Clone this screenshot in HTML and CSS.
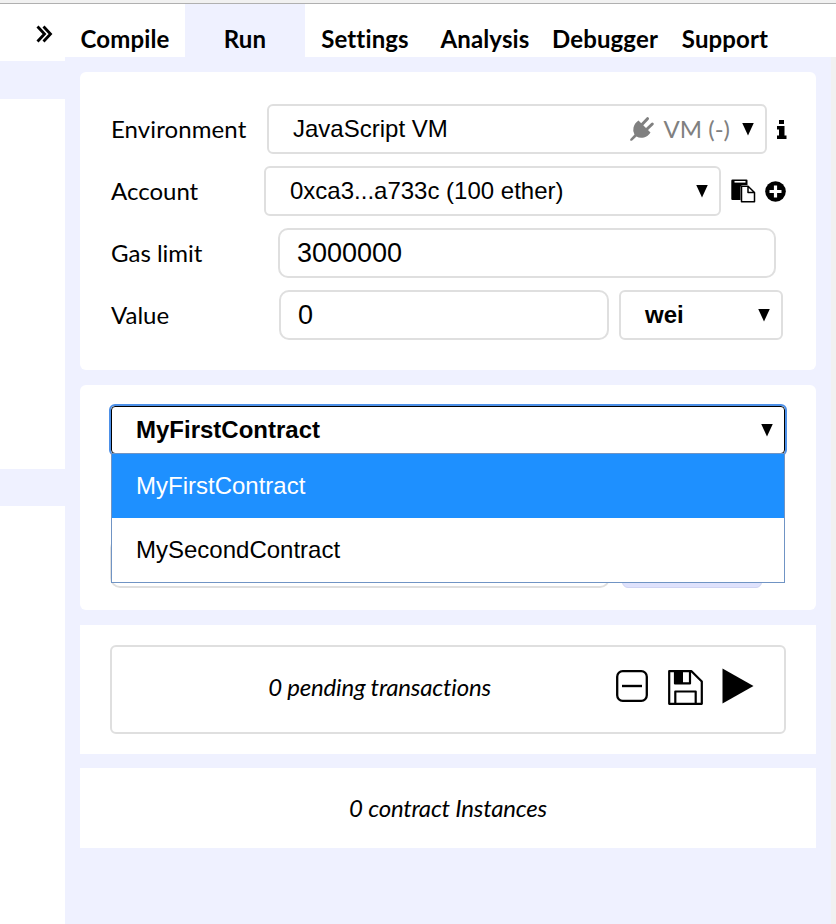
FILE: index.html
```html
<!DOCTYPE html>
<html lang="en">
<head>
<meta charset="utf-8">
<title>Run</title>
<link rel="stylesheet" href="styles.css">
</head>
<body>
<div class="chrome"></div>
<div class="app">
  <aside class="side">
    <div class="toggle"><svg width="18" height="18" viewBox="0 0 18 18" fill="none" stroke="#000" stroke-width="2.8"><path d="M1.500 1.500 8.500 9 1.500 16.500M7.500 1.500 14.500 9 7.500 16.500"/></svg></div>
    <div class="pane upper"></div>
    <div class="pane lower"></div>
  </aside>
  <div class="main">
    <nav class="tabs">
      <span class="tab">Compile</span><span class="tab active">Run</span><span class="tab">Settings</span><span class="tab">Analysis</span><span class="tab">Debugger</span><span class="tab">Support</span>
    </nav>
    <div class="body">
      <div class="content">
        <section class="card settings">
          <div class="row">
            <span class="label env-label">Environment</span>
            <div class="select env"><span>JavaScript VM</span>
              <span class="net"><svg width="24" height="24" viewBox="0 0 24 24"><path d="M8.500 3.500 20.500 15.500Q18 19.500 14 20.500 9.500 21.500 6.500 19.500L2.200 23.500Q1 24.200.3 23.500-.3 22.600.6 21.700L4.500 17.500Q2.500 14.500 3.500 10.500 4.500 6 8.500 3.500Z" fill="#808080"/><path d="m11.500 8 6-6.300M16 13l6.300-6" stroke="#808080" stroke-width="3" stroke-linecap="round"/></svg><span class="vm">VM (-)</span></span>
              <i class="arrow"></i></div>
            <svg class="info" width="10" height="19" viewBox="0 0 10 19"><path d="M2 0h5v4H2zM0 6h7.500v9.500H9.500V19H0v-3.500h2V9.500H0z"/></svg>
          </div>
          <div class="row">
            <span class="label">Account</span>
            <div class="select acct"><span>0xca3...a733c (100 ether)</span><i class="arrow"></i></div>
            <svg class="copy" width="25" height="24" viewBox="0 0 25 24"><path d="M1.500.5h14q1 0 1 1V6H12q-2.500 0-2.500 2.500V21h-8q-1.200 0-1.200-1V1.700Q.3.500 1.500.5Z"/><path d="M3.500 2.800h11" stroke="#fff" stroke-width="1.600"/><path d="M10.500 7.200h6.600l6.400 6.300v9.300h-13zM17 7.200v6.300h6.500" fill="#fff" stroke="#000" stroke-width="1.500" stroke-linejoin="round"/></svg>
            <svg class="plus" width="21" height="21" viewBox="0 0 21 21"><circle cx="10.500" cy="10.500" r="10.300"/><path d="M10.500 4.500v12M4.500 10.500h12" stroke="#fff" stroke-width="3.200"/></svg>
          </div>
          <div class="row">
            <span class="label">Gas limit</span>
            <div class="input gas">3000000</div>
          </div>
          <div class="row">
            <span class="label">Value</span>
            <div class="input val">0</div>
            <div class="select unit"><span>wei</span><i class="arrow"></i></div>
          </div>
        </section>
        <section class="card contract">
          <div class="select name"><span>MyFirstContract</span><i class="arrow"></i></div>
          <div class="covered"><div class="input address"></div><div class="button"></div></div>
          <div class="menu"><div class="option chosen">MyFirstContract</div><div class="option">MySecondContract</div></div>
        </section>
        <section class="card pending">
          <div class="box">
            <span class="count">0 pending transactions</span>
            <svg class="minus" width="32" height="32" viewBox="0 0 32 32" fill="none" stroke="#000"><rect x="1.200" y="1.200" width="29.600" height="29.600" rx="5.500" stroke-width="2.300"/><path d="M6 16h20" stroke-width="2.400"/></svg>
            <svg class="save" width="35" height="35" viewBox="0 0 35 35" fill="none" stroke="#000" stroke-width="2.200" stroke-linejoin="round"><path d="M1.200 1.200h22.300L33.800 11.500v22.300H1.200zM7.300 33.800V21.500h20.400v12.300M7 1.200v12.200h15V1.200"/><path d="M7 1.200h8v12.200H7z" fill="#000" stroke="none"/></svg>
            <svg width="32" height="36" viewBox="0 0 32 36"><path d="M.5.500 31.500 18 .5 35.500z"/></svg>
          </div>
        </section>
        <section class="card instances">0 contract Instances</section>
      </div>
      <div class="scroll"></div>
    </div>
  </div>
</div>
</body>
</html>
```
FILE: styles.css
```css
* { box-sizing: border-box; }
body { margin: 0; height: 924px; overflow: hidden; background: #eff1ff; color: #000; font-family: Lato, sans-serif; font-size: 24px; font-variant-ligatures: none; }
svg { display: block; flex: none; overflow: visible; }
.chrome { height: 4px; background: #f1f1f1; border-bottom: 1px solid #b0b0b0; }
.app { display: flex; height: 920px; }
.side { flex: none; width: 65px; display: flex; flex-direction: column; }
.toggle { height: 57px; background: #fff; padding: 21px 0 0 36px; }
.pane { background: #fff; }
.upper { height: 370px; margin-top: 38px; }
.lower { flex: 1; margin-top: 37px; }
.main { flex: 1; min-width: 0; display: flex; flex-direction: column; }
.tabs { height: 53px; display: flex; background: #fff; }
.tab { flex: none; width: 120px; padding-top: 17px; line-height: 36px; text-align: center; font-weight: 700; letter-spacing: .12px; white-space: nowrap; }
.active { background: #eff1ff; }
.body { flex: 1; display: flex; }
.content { flex: 1; min-width: 0; padding: 15px; display: flex; flex-direction: column; }
.scroll { width: 5px; background: #f1f1f1; }
.card { background: #fff; border-radius: 6px; }
.settings { height: 298px; padding: 32px 29px 32px 31px; display: flex; flex-direction: column; gap: 12px; }
.row { height: 50px; display: flex; align-items: center; }
.label { width: 169px; flex: none; line-height: 30px; }
.env-label { letter-spacing: .1px; }
.select, .input { height: 50px; border: 2px solid #dfdfdf; flex: none; background: #fff; font-family: "Liberation Sans", sans-serif; }
.select { border-radius: 6px; padding: 0 11px 0 24px; display: flex; align-items: center; justify-content: space-between; font-size: 24px; }
.arrow { width: 12px; height: 13px; background: #000; clip-path: polygon(0 0, 100% 0, 50% 100%); flex: none; }
.env { width: 500px; margin-left: -13px; }
.net { display: flex; align-items: center; gap: 10px; margin-left: auto; margin-right: 12px; color: #808080; font-family: Lato, sans-serif; }
.vm { line-height: 28px; padding-bottom: 1px; }
.info { margin-left: 10px; }
.acct { width: 457px; margin-left: -16px; }
.copy { margin-left: 10px; }
.plus { margin-left: 9px; }
.input { border-radius: 10px; padding-left: 17px; font-size: 27px; line-height: 46px; }
.gas { width: 498px; margin-left: -2px; }
.val { width: 330px; margin-left: -1px; }
.unit { width: 164px; margin-left: 10px; font-weight: 700; }
.contract { height: 225px; margin-top: 15px; padding: 21px 31px; position: relative; }
.name { width: 674px; height: 48px; border: 1px solid #000; outline: 2px solid #4d90e8; border-radius: 4px; font-weight: 700; padding: 0 11px 0 24px; }
.covered { display: flex; margin: 84px 0 0 -1px; }
.address { width: 500px; }
.button { width: 140px; height: 50px; margin-left: 12px; background: #dfe2fc; border: 1px solid #d0d5f3; border-radius: 6px; }
.menu { position: absolute; left: 31px; top: 68px; width: 674px; height: 130px; background: #fff; border: 1px solid #7094c4; font-family: "Liberation Sans", sans-serif; }
.option { height: 64px; line-height: 63px; padding-left: 24px; }
.chosen { background: #1e90ff; color: #fff; }
.pending { height: 129px; margin-top: 15px; border-radius: 0; padding: 20px 30px; }
.box { height: 89px; padding-bottom: 7px; border: 2px solid #dfdfdf; border-radius: 6px; display: flex; align-items: center; }
.count { flex: none; width: 425px; text-align: center; padding-left: 110px; white-space: nowrap; font-style: italic; letter-spacing: -.2px; }
.minus { margin-left: 79px; }
.save { margin: 2px 19px 0 20px; }
.instances { height: 80px; margin-top: 14px; border-radius: 0; text-align: center; line-height: 79px; font-style: italic; letter-spacing: -.22px; }
```
